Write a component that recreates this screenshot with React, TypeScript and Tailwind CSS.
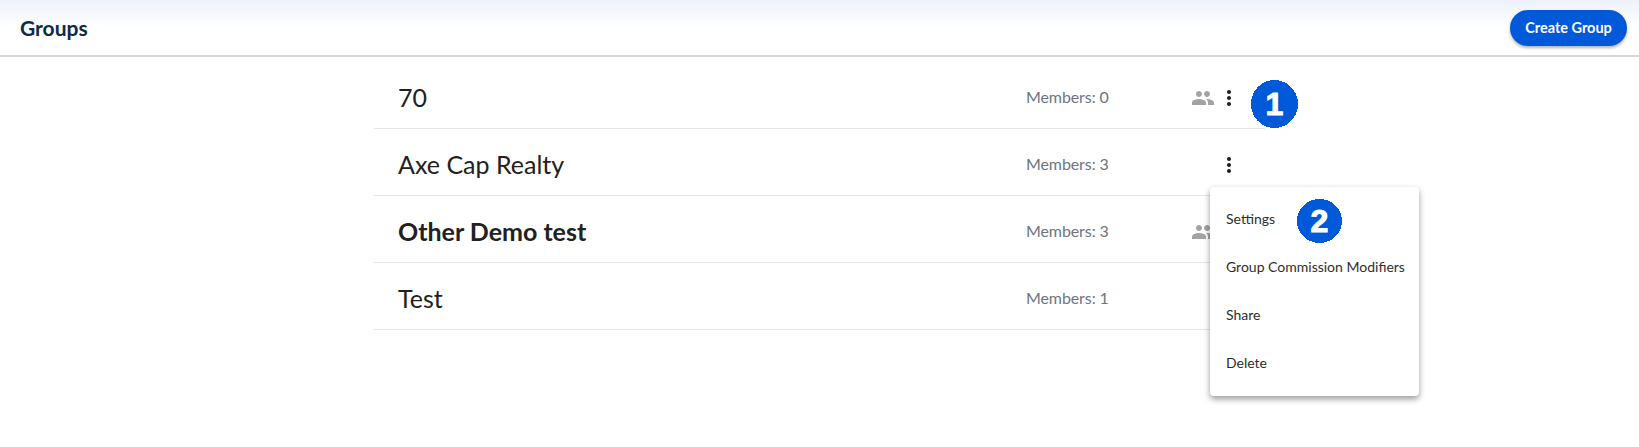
const PEOPLE =
  "M16 11c1.66 0 2.99-1.34 2.99-3S17.66 5 16 5c-1.66 0-3 1.34-3 3s1.34 3 3 3zm-8 0c1.66 0 2.99-1.34 2.99-3S9.66 5 8 5C6.34 5 5 6.34 5 8s1.34 3 3 3zm0 2c-2.33 0-7 1.17-7 3.5V19h14v-2.5c0-2.33-4.67-3.5-7-3.5zm8 0c-.29 0-.62.02-.97.05 1.16.84 1.97 1.97 1.97 3.45V19h6v-2.5c0-2.33-4.67-3.5-7-3.5z";
const MORE =
  "M12 8c1.1 0 2-.9 2-2s-.9-2-2-2-2 .9-2 2 .9 2 2 2zm0 2c-1.1 0-2 .9-2 2s.9 2 2 2 2-.9 2-2-.9-2-2-2zm0 6c-1.1 0-2 .9-2 2s.9 2 2 2 2-.9 2-2-.9-2-2-2z";

const GROUPS = [
  { name: "70", members: 0, shared: true, bold: false },
  { name: "Axe Cap Realty", members: 3, shared: false, bold: false },
  { name: "Other Demo test", members: 3, shared: true, bold: true },
  { name: "Test", members: 1, shared: false, bold: false },
];

const MENU_ITEMS = ["Settings", "Group Commission Modifiers", "Share", "Delete"];

function Icon({ d, className }: { d: string; className: string }) {
  return (
    <svg viewBox="0 0 24 24" fill="currentColor" className={className}>
      <path d={d} />
    </svg>
  );
}

// Blue numbered callout painted over the screenshot (hard, un-antialiased edge)
function Callout({ n, className }: { n: number; className: string }) {
  return (
    <div className={`absolute flex items-center justify-center font-['Liberation_Sans',sans-serif] text-[32px] leading-none font-bold text-white [-webkit-text-stroke:1px_white] ${className}`}>
      <svg viewBox="0 0 48 48" preserveAspectRatio="none" shapeRendering="crispEdges" className="absolute inset-0 h-full w-full">
        <circle cx="24" cy="24" r="24" fill="#0059d9" />
      </svg>
      <span className="relative">{n}</span>
    </div>
  );
}

export default function App() {
  return (
    <div className="relative h-[447px] w-[1639px] overflow-hidden bg-white font-['Lato',sans-serif]">
      {/* Header */}
      <header className="flex h-[57px] items-center justify-between border-b-2 border-[#d6d6d6] bg-gradient-to-b from-[#ecf1fb] to-white to-[50%] pr-3 pl-5">
        <h1 className="text-[21px] font-bold text-[#0e2a47]">Groups</h1>
        <button className="h-9 w-[117px] rounded-full bg-[#0059d9] text-[14.5px] font-bold text-white shadow-[0_2px_3px_rgba(0,0,0,0.3)]">
          Create Group
        </button>
      </header>

      {/* Group list */}
      <main className="flex justify-center pt-[5px]">
        <ul className="w-[891px]">
          {GROUPS.map((group) => (
            <li
              key={group.name}
              className="flex h-[67px] items-center border-b border-[#e6e6e6] pt-1.5 pl-6"
            >
              <span className={`w-[628px] text-[25px] text-[#212121] ${group.bold ? "font-bold" : "font-normal"}`}>
                {group.name}
              </span>
              <span className="w-[165px] -translate-y-px text-base tracking-[-0.1px] text-[#6e7581]">Members: {group.members}</span>
              <span className="w-[26px]">
                {group.shared && <Icon d={PEOPLE} className="h-6 w-6 text-[#a3a3a3]" />}
              </span>
              <Icon d={MORE} className="h-6 w-6 text-[#1a1a2a]" />
            </li>
          ))}
        </ul>
      </main>

      {/* Open row menu */}
      <div className="absolute top-[187px] left-[1210px] w-[209px] rounded bg-white pt-2 pb-[9px] shadow-[0_3px_6px_rgba(0,0,0,0.4)]">
        {MENU_ITEMS.map((item) => (
          <div key={item} className="flex h-12 items-center pl-4 text-sm text-[#2e2e2e]">
            {item}
          </div>
        ))}
      </div>

      <Callout n={1} className="top-[80px] left-[1251px] h-12 w-[47px]" />
      <Callout n={2} className="top-[199px] left-[1297px] h-11 w-[45px]" />
    </div>
  );
}
